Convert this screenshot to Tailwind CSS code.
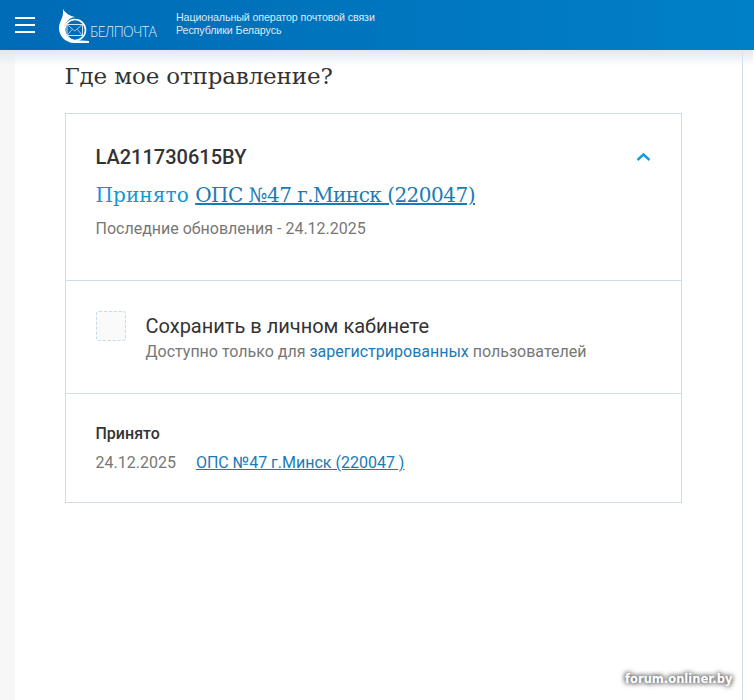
<!DOCTYPE html>
<html lang="ru"><head><meta charset="utf-8"><title>Белпочта</title>
<script src="https://cdn.jsdelivr.net/npm/@tailwindcss/browser@4"></script></head>
<body class="bg-[#f7f7f7] font-['Roboto',sans-serif] h-[700px] overflow-hidden relative">
<header class="h-[50px] bg-gradient-to-r from-[#006bb6] to-[#0080c8] flex items-center relative z-10">
  <div class="ml-[15px] w-[20px] flex flex-col gap-[5px]">
    <span class="h-[2px] bg-white block"></span><span class="h-[2px] bg-white block"></span><span class="h-[2px] bg-white block"></span>
  </div>
  <div class="ml-[24px] w-[100px] h-[36px] mt-[-1px] relative shrink-0">
    <svg width="32" height="34" viewBox="0 0 32 34" class="absolute left-0 top-[2px]">
      <path d="M4 0 C6 4 11 7 16 8 C10 9 6 13 6 19 C6 25 10 29 15 31 L30 32 L30 34 L14 34 C6 33 0 27 0 19 C0 13 4 9 4 4 Z" fill="#fff"/>
      <circle cx="16" cy="21" r="10.5" fill="none" stroke="#fff" stroke-width="1.6"/>
      <rect x="8" y="15.5" width="15.5" height="11" fill="none" stroke="#cfe3f3" stroke-width="1"/>
      <path d="M8 15.5 L15.7 22 L23.5 15.5 M8 26.5 L13 20.5 M23.5 26.5 L18.5 20.5" fill="none" stroke="#cfe3f3" stroke-width="0.8"/>
    </svg>
    <span class="absolute left-[31px] top-[16px] text-[14px] leading-[17px] text-[#dcebf6] font-light font-['Open_Sans',sans-serif] tracking-[-0.65px]">БЕЛПОЧТА</span>
  </div>
  <div class="ml-[17px] text-[10.7px] leading-[12.5px] text-[#dcebf6] mt-[-3px] font-['Liberation_Sans',sans-serif] tracking-[-0.01em] whitespace-nowrap">Национальный оператор почтовой связи<br>Республики Беларусь</div>
</header>
<main class="ml-[15px] w-[728px] h-[650px] bg-white border-r border-[#cfdde8] shadow-[11px_0_0_#fff] relative pl-[49.5px] pr-[60px]">
  <div class="absolute left-[-15px] right-[-11px] top-0 h-[16px] bg-gradient-to-b from-[#dfe8f1] to-white/0"></div>
  <h1 class="relative pt-[10px] text-[23px] leading-[32px] text-[#333] font-['DejaVu_Serif',serif] tracking-[-0.15px]">Где мое отправление?</h1>
  <section class="mt-[21px] ml-[0.5px] w-[617px] border border-[#cfdde8]">
    <div class="h-[167px] border-b border-[#cfdde8] px-[30px] pt-[30px] relative">
      <div class="text-[20px] leading-[26px] font-medium text-[#333] ml-[-0.5px]">LA211730615BY</div>
      <svg class="absolute right-[30px] top-[38px]" width="15" height="10" viewBox="0 0 15 10"><path d="M1.5 8 L7.5 2.5 L13.5 8" fill="none" stroke="#1a9cdc" stroke-width="2.4"/></svg>
      <div class="mt-[12px] text-[20px] leading-[26px] font-['DejaVu_Serif',serif] ml-[-0.5px]"><span class="text-[#0e96dc] tracking-[0.1px]">Принято</span> <a class="text-[#1a7ab5] underline tracking-[-0.52px]">ОПС №47 г.Минск (220047)</a></div>
      <div class="mt-[9px] text-[16px] leading-[24px] text-[#777] ml-[-0.5px]">Последние обновления - 24.12.2025</div>
    </div>
    <div class="h-[113px] border-b border-[#cfdde8] px-[30px] pt-[30px] flex">
      <div class="w-[30px] h-[30px] rounded-[3px] border border-dashed border-[#c5d9ea] bg-[#fafafa] shrink-0"></div>
      <div class="ml-[19.5px]">
        <div class="text-[20px] leading-[28px] text-[#333] mt-[1px]">Сохранить в личном кабинете</div>
        <div class="text-[16px] leading-[24px] text-[#777]">Доступно только для <a class="text-[#1a7ab5]">зарегистрированных</a> пользователей</div>
      </div>
    </div>
    <div class="h-[108px] px-[30px] pt-[28px]">
      <div class="text-[16px] leading-[24px] font-medium text-[#333] ml-[-0.5px]">Принято</div>
      <div class="mt-[5px] text-[16px] leading-[24px] text-[#777] flex gap-[20px] ml-[-0.5px]"><span>24.12.2025</span><a class="text-[#1a7ab5] underline">ОПС №47 г.Минск (220047 )</a></div>
    </div>
  </section>
</main>
<div class="absolute left-[625px] top-[672px] text-[11.5px] leading-[15px] font-bold text-white font-['DejaVu_Sans',sans-serif] tracking-[0.02px] [text-shadow:0_0_4px_#666,0_0_5px_#777,0_0_6px_#888]">forum.onliner.by</div>
</body></html>
